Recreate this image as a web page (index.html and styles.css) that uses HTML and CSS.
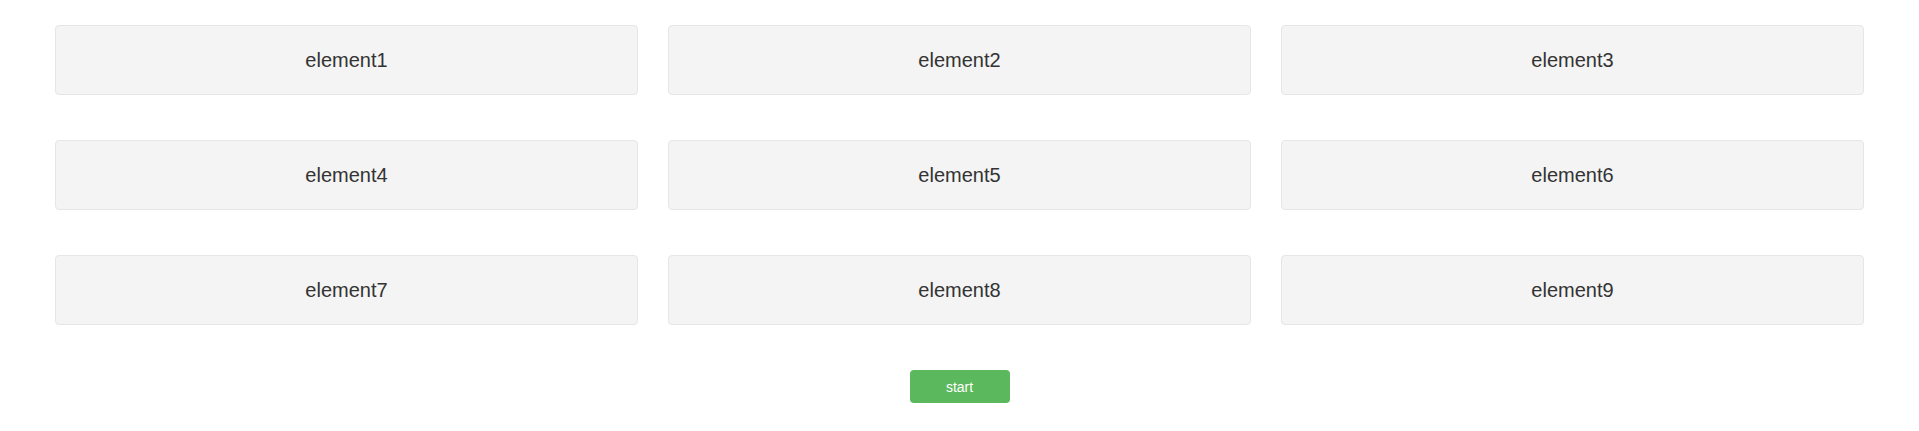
FILE: index.html
```html
<!DOCTYPE html>
<html>
<head>
<meta charset="utf-8">
<link rel="stylesheet" href="styles.css">
</head>
<body>
<div class="page">
  <div class="grid">
    <div class="cell">element1</div>
    <div class="cell">element2</div>
    <div class="cell">element3</div>
    <div class="cell">element4</div>
    <div class="cell">element5</div>
    <div class="cell">element6</div>
    <div class="cell">element7</div>
    <div class="cell">element8</div>
    <div class="cell">element9</div>
  </div>
  <div class="actions">
    <button class="start">start</button>
  </div>
</div>
</body>
</html>
```
FILE: styles.css
```css
html, body {
  margin: 0;
  padding: 0;
  background: #ffffff;
}
.page {
  padding: 25px 55px 0 55px;
  font-family: "Liberation Sans", Arial, sans-serif;
}
.grid {
  display: grid;
  grid-template-columns: repeat(3, 1fr);
  column-gap: 30px;
  row-gap: 45px;
}
.cell {
  height: 70px;
  box-sizing: border-box;
  background: #f4f4f4;
  border: 1px solid #e6e6e6;
  border-radius: 4px;
  display: flex;
  align-items: center;
  justify-content: center;
  font-size: 20px;
  color: #333333;
}
.actions {
  display: flex;
  justify-content: center;
  margin-top: 45px;
}
.start {
  width: 100px;
  height: 33px;
  border: none;
  border-radius: 4px;
  background: #5cb85c;
  color: #ffffff;
  font-family: "Liberation Sans", Arial, sans-serif;
  font-size: 14px;
  padding: 0;
  cursor: pointer;
}
```
